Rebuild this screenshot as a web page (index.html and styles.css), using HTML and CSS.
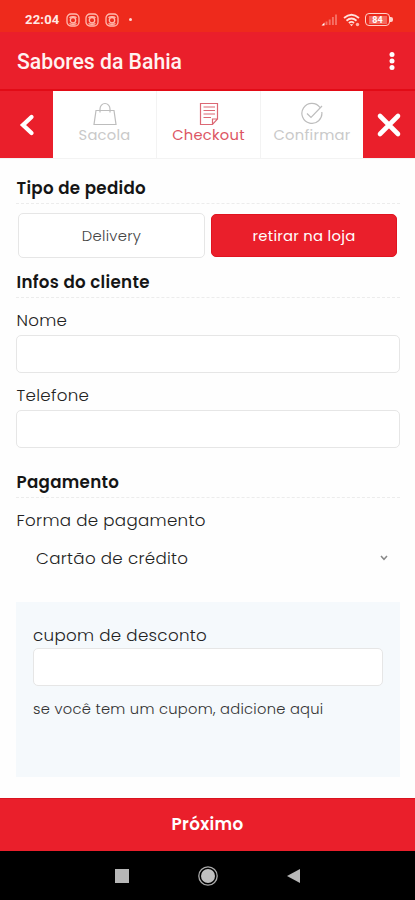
FILE: index.html
```html
<!DOCTYPE html>
<html lang="pt-BR">
<head>
<meta charset="utf-8">
<meta name="viewport" content="width=device-width, initial-scale=1">
<title>Sabores da Bahia</title>
<link rel="stylesheet" href="styles.css">
</head>
<body>
<svg width="0" height="0" class="defs">
  <symbol id="insta" viewBox="0 0 14 14"><rect x="1" y="1" width="12" height="12" rx="4"/><circle cx="7" cy="7.2" r="2.7"/><path d="M3.500 4.800C5 3.200 9 3.200 10.500 4.800M3.500 10.500C5 11.500 9 11.500 10.500 10.500"/></symbol>
</svg>
<div class="status">
  <span class="time">22:04</span>
  <svg class="insta"><use href="#insta"/></svg>
  <svg class="insta"><use href="#insta"/></svg>
  <svg class="insta"><use href="#insta"/></svg>
  <i class="dot"></i>
  <span class="spacer"></span>
  <svg class="signal" width="17" height="13" viewBox="0 0 17 13"><path d="M0.500 12.500L3.500 9.500V12.500z" fill="#fff"/><path d="M5.500 12V8.500M8.700 12V6.500M11.900 12V4M15 12V1.500" stroke="#f67065" stroke-width="1.900"/></svg>
  <svg class="wifi" width="18" height="14" viewBox="0 0 18 14"><path d="M1 5Q8.500-1.500 16 5M3.500 7.700Q8.500 3.300 13.500 7.700M5.900 10Q8.500 7.800 11 10" fill="none" stroke="#ffe0da" stroke-width="1.800"/><path d="M6.700 11.200h3.600L8.500 13.200z" fill="#ffe0da"/><circle cx="14.500" cy="11.500" r="1.700" fill="#ffb5aa"/></svg>
  <span class="battery"><b>84</b></span>
</div>
<header class="appbar">
  <h1>Sabores da Bahia</h1>
  <svg width="6" height="20" viewBox="0 0 6 20" fill="#fff"><circle cx="3" cy="3.500" r="2.500"/><circle cx="3" cy="10" r="2.500"/><circle cx="3" cy="16.500" r="2.500"/></svg>
</header>
<nav class="steps">
  <div class="side"><svg width="16" height="24" viewBox="0 0 16 24"><path d="M12.500 4L4 12L12.500 20" fill="none" stroke="#fff" stroke-width="4.300" stroke-linecap="round"/></svg></div>
  <div class="step">
    <svg width="24" height="24" viewBox="0 0 24 24"><path d="M3 8.500H21L23 22.500H1zM7 10.500V7a5 5.500 0 0 1 10 0v3.500"/></svg>
    <span>Sacola</span>
  </div>
  <div class="step active">
    <svg width="24" height="24" viewBox="0 0 24 24"><path d="M3.500 1.500H20.500V17L15.500 22.500H3.500zM20.500 17H15.500V22.500M6.500 5H18M6.500 8.500H18M6.500 12H18M6.500 15.500H14"/></svg>
    <span>Checkout</span>
  </div>
  <div class="step">
    <svg width="24" height="24" viewBox="0 0 24 24"><path d="M20 5.500A10 10 0 1 0 21.800 10M7 11.500L11 15.500L22 4"/></svg>
    <span>Confirmar</span>
  </div>
  <div class="side close"><svg width="26" height="26" viewBox="0 0 26 26"><path d="M4 4L22 22M22 4L4 22" stroke="#fff" stroke-width="4.600" stroke-linecap="round"/></svg></div>
</nav>
<main>
  <h2>Tipo de pedido</h2>
  <div class="choices">
    <button>Delivery</button>
    <button class="selected">retirar na loja</button>
  </div>
  <h2>Infos do cliente</h2>
  <label for="nome">Nome</label>
  <input id="nome">
  <label for="tel">Telefone</label>
  <input id="tel">
  <h2 class="pay">Pagamento</h2>
  <label>Forma de pagamento</label>
  <div class="select"><span>Cartão de crédito</span><svg width="8" height="6" viewBox="0 0 8 6"><path d="M1 1L4 4.300L7 1" fill="none" stroke="#888" stroke-width="1.500"/></svg></div>
  <section class="coupon">
    <label for="cupom">cupom de desconto</label>
    <input id="cupom">
    <p>se você tem um cupom, adicione aqui</p>
  </section>
</main>
<footer class="next"><span>Próximo</span></footer>
<div class="sysnav">
  <svg width="20" height="20" viewBox="0 0 20 20"><rect x="3" y="3" width="14" height="14" fill="#b7b7b7"/></svg>
  <svg width="20" height="20" viewBox="0 0 20 20"><circle cx="10" cy="10" r="9.200" fill="none" stroke="#aaa" stroke-width="1.300"/><circle cx="10" cy="10" r="7" fill="#c0c0c0"/></svg>
  <svg width="20" height="20" viewBox="0 0 20 20"><path d="M3 10L16 3V17z" fill="#b7b7b7"/></svg>
</div>
</body>
</html>
```
FILE: styles.css
```css
* { box-sizing: border-box; }
body {
  margin: 0;
  width: 415px;
  height: 900px;
  overflow: hidden;
  display: flex;
  flex-direction: column;
  background: #fefefe;
  color: #222;
  font-family: Poppins, Inter, sans-serif;
}
.defs { display: none; }

.status {
  height: 32px;
  padding: 7px 25px 0;
  display: flex;
  align-items: center;
  background: #ee2a1c;
}
.time { width: 35px; margin-right: 6px; font: 700 13px Roboto, sans-serif; color: #ffe9e4; letter-spacing: .2px; }
.insta { width: 14px; height: 14px; margin-right: 5.300px; fill: none; stroke: #ffb9ad; stroke-width: 1.300; }
.dot { width: 3px; height: 3px; margin-left: 5px; border-radius: 50%; background: #ffd9d3; }
.spacer { flex: 1; }
.signal { margin-right: 5px; }
.wifi { margin-right: 4px; }
.battery {
  width: 25px;
  height: 13px;
  display: grid;
  place-items: center;
  border: 1.500px solid #ffd0c8;
  border-radius: 4px;
  position: relative;
}
.battery::after { content: ""; position: absolute; right: -4px; top: 3px; width: 3px; height: 5px; border-radius: 0 2px 2px 0; background: #ffd0c8; }
.battery b { width: 18px; height: 8px; background: #f4695f; color: #fff; font: 700 9px/8px Roboto, sans-serif; text-align: center; }

.appbar {
  height: 59px;
  padding: 0 20px 0 17px;
  display: flex;
  align-items: center;
  justify-content: space-between;
  background: #ea1f2b;
  border-bottom: 2px solid #e20b16;
}
.appbar h1 { margin: 2px 0 0; font: 500 21.200px Roboto, sans-serif; color: #fff2f1; }

.steps {
  height: 68px;
  display: grid;
  grid-template-columns: 53px 104px 104px 102px 52px;
  background: #fff;
  border-bottom: 1px solid #f3f3f3;
}
.side { display: grid; place-items: center; background: #ea1f2b; }
.step { display: flex; flex-direction: column; align-items: center; padding-top: 11px; color: #c9c9c9; border-right: 1px solid #f3f3f3; font-size: 14.700px; line-height: 18px; letter-spacing: .018em; }
.step:nth-child(4) { border-right: 0; }
.step svg { fill: none; stroke: #bdbdbd; stroke-width: 1.200; }
.step.active { color: #dc5563; }
.step.active svg { stroke: #dc6874; }

main { height: 639px; padding: 19px 15px 0 16px; letter-spacing: .018em; }
h2, label, .select, p { letter-spacing: .018em; }
h2 { height: 26px; margin: 0; padding-left: .5px; border-bottom: 1px dashed #ececec; font-size: 16.700px; font-weight: 600; line-height: 20px; color: #151515; }
.choices { display: grid; grid-template-columns: 187px 186px; gap: 6px; margin: 9px 0 14px 2px; }
button { height: 45px; padding: 0; background: #fff; border: 1px solid #e6e6e6; border-radius: 5px; color: #444; font: 300 14.800px Poppins, Inter, sans-serif; letter-spacing: .018em; }
button.selected { height: 43px; margin-top: 1px; background: #ea1f2b; border-color: #e01420; color: #fff; font-weight: 400; }
label { display: block; height: 37px; padding: 12px 0 0 .5px; font-size: 16.700px; font-weight: 300; line-height: 20px; color: #222; }
input { display: block; width: 100%; height: 38px; background: #fff; border: 1px solid #e6e6e6; border-radius: 5px; }
h2.pay { margin-top: 24px; }
.select { height: 42px; padding: 4px 12px 0 20px; display: flex; align-items: center; justify-content: space-between; font-size: 16.700px; font-weight: 300; color: #222; }
.coupon { width: 384px; height: 175px; margin-top: 25px; padding: 12px 17px; background: #f5f9fc; }
.coupon label { height: 34px; padding: 11px 0 0; }
.coupon p { margin: 13px 0 0; font-size: 14.700px; font-weight: 300; line-height: 20px; color: #333; }

.next { height: 53px; padding-bottom: 2px; display: grid; place-items: center; background: #ea1f2b; border-top: 1px solid #d9131f; color: #fff; font-size: 16.800px; font-weight: 600; letter-spacing: .018em; }
.sysnav { flex: 1; display: flex; justify-content: center; align-items: center; gap: 66px; background: #000; }
```
